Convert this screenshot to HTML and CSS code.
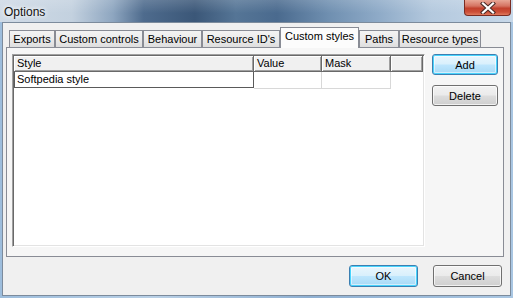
FILE: index.html
```html
<!DOCTYPE html>
<html lang="en">
<head>
  <meta charset="UTF-8">
  <title>Options</title>
  <link rel="stylesheet" href="styles.css">
</head>
<body>
  <div class="window">
    <div class="titlebar">
      <span class="title">Options</span>
      <div class="close">
        <svg width="16" height="12" viewBox="0 0 16 12">
          <path d="M3 1.5 L13 10.5 M13 1.5 L3 10.5" stroke="#4a2a26" stroke-width="4.2" stroke-linecap="square"/>
          <path d="M3 1.5 L13 10.5 M13 1.5 L3 10.5" stroke="#fff" stroke-width="2.2" stroke-linecap="square"/>
        </svg>
      </div>
    </div>

    <div class="client">
      <!-- tab strip -->
      <div class="tabs">
        <div class="tab w-exports">Exports</div>
        <div class="tab w-controls">Custom controls</div>
        <div class="tab w-behaviour">Behaviour</div>
        <div class="tab w-ids">Resource ID's</div>
        <div class="tab active w-styles">Custom styles</div>
        <div class="tab w-paths">Paths</div>
        <div class="tab w-types">Resource types</div>
      </div>

      <div class="panel">
        <div class="list">
          <div class="list-header">
            <div class="col col-style">Style</div>
            <div class="col col-value">Value</div>
            <div class="col col-mask">Mask</div>
            <div class="col col-rest"></div>
          </div>
          <div class="list-row">
            <div class="cell cell-style edit">Softpedia style</div>
            <div class="cell col-value"></div>
            <div class="cell col-mask"></div>
          </div>
        </div>

        <div class="side-buttons">
          <button type="button" class="btn default">Add</button>
          <button type="button" class="btn">Delete</button>
        </div>
      </div>

      <!-- dialog buttons -->
      <div class="footer">
        <button type="button" class="btn default wide">OK</button>
        <button type="button" class="btn wide">Cancel</button>
      </div>
    </div>
  </div>
</body>
</html>
```

FILE: styles.css
```css
html, body {
  margin: 0;
  padding: 0;
}

body {
  width: 513px;
  height: 298px;
  overflow: hidden;
  font-family: "Liberation Sans", Arial, sans-serif;
  font-size: 11px;
  color: #000;
}

.window {
  width: 513px;
  height: 298px;
  display: flex;
  flex-direction: column;
  background: linear-gradient(90deg, #9dbddc 0%, #b9d0e6 30%, #8fb0d2 60%, #a9c6e2 100%);
}

/* Title bar */
.titlebar {
  height: 22px;
  display: flex;
  align-items: flex-start;
  background:
    linear-gradient(180deg, rgba(255, 255, 255, 0.15) 0%, rgba(255, 255, 255, 0) 60%),
    linear-gradient(90deg, #cfdae6 0%, #c3d1df 14%, #8ea6c0 22%, #4e6b8d 28%, #3b5778 38%, #557596 46%, #4a6a8e 54%, #6f8fb0 64%, #8fabc8 74%, #b4c9de 84%, #c7d8e9 100%);
}

.title {
  padding: 5px 0 0 4px;
  font-size: 12px;
  color: #111;
  text-shadow: 0 0 4px #fff, 0 0 6px #fff;
}

.close {
  margin-left: auto;
  margin-right: 2px;
  width: 45px;
  height: 15px;
  border: 1px solid #7a2c22;
  border-top: none;
  border-radius: 0 0 4px 4px;
  background: linear-gradient(180deg, #e8a796 0%, #d57462 40%, #c2412d 55%, #cc4f38 80%, #e07a5e 100%);
  display: flex;
  align-items: center;
  justify-content: center;
}

/* Client area */
.client {
  margin: 0 2px 2px 2px;
  flex: 1;
  border: 1px solid #7c8b9c;
  background: #f0f0f0;
  padding: 4px 6px 0 3px;
  display: flex;
  flex-direction: column;
}

.tabs {
  height: 20px;
  display: flex;
  align-items: flex-end;
  padding-left: 3px;
}

.tab {
  box-sizing: border-box;
  height: 17px;
  border: 1px solid #898c95;
  border-bottom: none;
  background: linear-gradient(180deg, #f3f3f3 0%, #ebebeb 50%, #dedede 100%);
  text-align: center;
  line-height: 16px;
  white-space: nowrap;
}

.tab.active {
  height: 21px;
  margin-bottom: -1px;
  position: relative;
  z-index: 1;
  background: #fcfcfc;
  line-height: 17px;
}

.w-exports { width: 46px; }
.w-controls { width: 88px; }
.w-behaviour { width: 59px; }
.w-ids { width: 78px; }
.w-styles { width: 79px; }
.w-paths { width: 40px; }
.w-types { width: 82px; }

.panel {
  box-sizing: border-box;
  width: 498px;
  height: 210px;
  border: 1px solid #898c95;
  background: #f6f6f6;
  padding: 6px 5px 9px 5px;
  display: flex;
  gap: 7px;
}

/* List view */
.list {
  box-sizing: border-box;
  width: 413px;
  height: 193px;
  background: #fff;
  border: 1px solid;
  border-color: #a0a0a0 #fff #fff #a0a0a0;
  box-shadow: inset 1px 1px #696969, inset -1px -1px #e3e3e3;
  padding: 1px;
}

.list-header {
  display: flex;
  height: 16px;
}

.col {
  box-sizing: border-box;
  height: 16px;
  background: #f0f0f0;
  border-right: 1px solid #696969;
  border-bottom: 1px solid #696969;
  box-shadow: inset 1px 1px #fff, inset -1px -1px #a0a0a0;
  padding-left: 3px;
  line-height: 15px;
}

.col-style { width: 240px; }
.col-value { width: 68px; }
.col-mask { width: 69px; }
.col-rest { flex: 1; }

.list-row {
  display: flex;
  height: 17px;
}

.cell {
  box-sizing: border-box;
  height: 17px;
  border-right: 1px solid #d8d8d8;
  border-bottom: 1px solid #d8d8d8;
  line-height: 15px;
}

.cell-style { width: 240px; }

.cell.edit {
  border: 1px solid #5a5a5a;
  border-top: none;
  padding-left: 2px;
  height: 16px;
}

/* Buttons */
.side-buttons {
  display: flex;
  flex-direction: column;
  gap: 10px;
}

.btn {
  box-sizing: border-box;
  width: 66px;
  height: 21px;
  padding: 0;
  font-family: "Liberation Sans", Arial, sans-serif;
  font-size: 11px;
  color: #000;
  border: 1px solid #707070;
  border-radius: 3px;
  background: linear-gradient(180deg, #f2f2f2 0%, #ebebeb 48%, #dddddd 52%, #cfcfcf 100%);
  box-shadow: inset 0 0 0 1px rgba(255, 255, 255, 0.7);
}

.btn.default {
  border-color: #3c7fb1;
  background: linear-gradient(180deg, #eaf6fd 0%, #d9f0fc 48%, #bee6fd 52%, #a7d9f5 100%);
  box-shadow: inset 0 0 0 1px #48d4fd, inset 0 0 0 2px rgba(255, 255, 255, 0.5);
}

.footer {
  display: flex;
  justify-content: flex-end;
  gap: 15px;
  margin-top: 8px;
  padding-right: 2px;
}

.btn.wide {
  width: 69px;
  height: 22px;
}
```
